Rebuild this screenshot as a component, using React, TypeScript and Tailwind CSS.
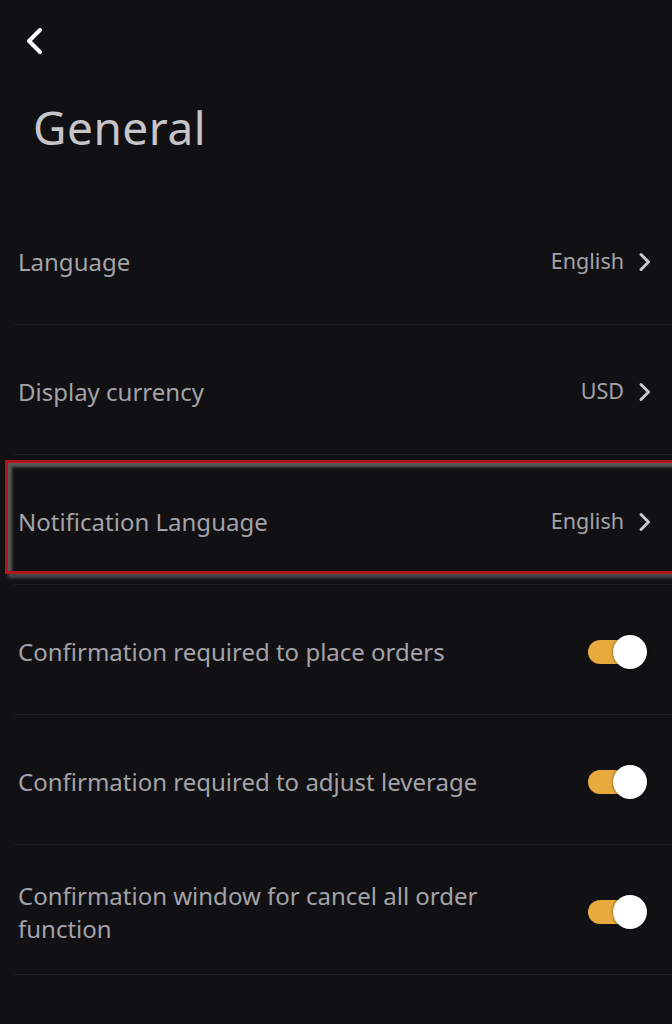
import React from "react";

const Chevron = () => (
  <svg width="14" height="20" viewBox="0 0 14 20" fill="none">
    <path d="M3 2.5 L10.5 10 L3 17.5" stroke="#c9c9cd" strokeWidth="3" strokeLinecap="round" strokeLinejoin="round" />
  </svg>
);

const Toggle = () => (
  <div className="relative w-[62px] h-[36px] mr-[4px]">
    <div className="absolute left-[2px] top-[6px] w-[44px] h-[24px] rounded-full bg-[#e9aa3d]" />
    <div className="absolute left-[27px] top-[1px] w-[34px] h-[34px] rounded-full bg-white shadow-[0_0_3px_rgba(0,0,0,0.6)]" />
  </div>
);

type RowProps = { label: React.ReactNode; value?: string; toggle?: boolean; highlight?: boolean };

const Row = ({ label, value, toggle, highlight }: RowProps) => (
  <div className="h-[130px] ml-[14px] border-b border-[#1d1d22] relative">
    {highlight && (
      <div className="absolute left-[-9px] right-[-10px] top-[5px] bottom-[10px] border-[3px] border-[#b3151c] shadow-[inset_4px_4px_3px_rgba(120,120,120,0.7),3px_4px_3px_rgba(110,110,110,0.6)]" />
    )}
    <div className="h-full flex items-center justify-between pl-[4px] pr-[20px] pt-[4px]">
      <div className="text-[24px] leading-[33px] text-[#a3a3a8] max-w-[500px]">{label}</div>
      {toggle ? (
        <Toggle />
      ) : (
        <div className="flex items-center gap-[14px]">
          <span className="text-[21.5px] text-[#a3a3a8]">{value}</span>
          <Chevron />
        </div>
      )}
    </div>
  </div>
);

export default function App() {
  return (
    <div className="w-[672px] h-[1024px] bg-[#111114] overflow-hidden" style={{ fontFamily: '"Noto Sans", sans-serif' }}>
      <div className="h-[80px] pl-[24px] pt-[27px]">
        <svg width="22" height="30" viewBox="0 0 22 30" fill="none">
          <path d="M16 3 L5 14 L16 25" stroke="#ffffff" strokeWidth="4" strokeLinecap="round" strokeLinejoin="round" />
        </svg>
      </div>
      <div className="h-[115px] pl-[33px] pt-[19px]">
        <h1 className="text-[46px] leading-[56px] text-[#c6c6ca] tracking-[0.5px]">General</h1>
      </div>
      <Row label="Language" value="English" />
      <Row label="Display currency" value="USD" />
      <Row label="Notification Language" value="English" highlight />
      <Row label="Confirmation required to place orders" toggle />
      <Row label="Confirmation required to adjust leverage" toggle />
      <Row label={<>Confirmation window for cancel all order<br />function</>} toggle />
    </div>
  );
}
